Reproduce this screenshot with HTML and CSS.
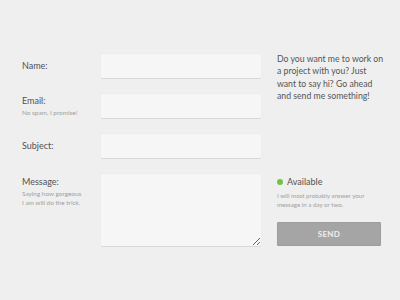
FILE: index.html
```html
<!DOCTYPE html>
<html lang="en">
<head>
  <meta charset="UTF-8" />
  <title>Contact</title>
  <link rel="stylesheet" href="styles.css">
</head>
<body>
  <div class="contact">
    <form class="fields">
      <div class="label">
        <span class="label-title">Name:</span>
      </div>
      <input type="text" name="name" />

      <div class="label">
        <span class="label-title">Email:</span>
        <span class="label-note">No spam, I promise!</span>
      </div>
      <input type="email" name="email" />

      <div class="label">
        <span class="label-title">Subject:</span>
      </div>
      <input type="text" name="subject" />

      <div class="label label-top">
        <span class="label-title">Message:</span>
        <span class="label-note">Saying how gorgeous<br>I am will do the trick.</span>
      </div>
      <textarea name="message"></textarea>
    </form>

    <div class="aside">
      <p class="intro">Do you want me to work on<br>a project with you? Just<br>want to say hi? Go ahead<br>and send me something!</p>

      <div class="status">
        <div class="status-line"><span class="dot"></span>Available</div>
        <p class="status-note">I will most probably answer your<br>message in a day or two.</p>
      </div>

      <button type="submit">SEND</button>
    </div>
  </div>
</body>
</html>
```

FILE: styles.css
```css
/* Base */
* {
  margin: 0;
  padding: 0;
  box-sizing: border-box;
  font-family: 'Lato', 'Open Sans', sans-serif;
}

body {
  background: #efefef;
  color: #555;
  width: 400px;
  height: 300px;
}

/* Layout */
.contact {
  display: flex;
  padding: 54px 0 0 22px;
}

.fields {
  display: grid;
  grid-template-columns: 79px 160px;
  row-gap: 16px;
}

/* Labels */
.label {
  display: flex;
  flex-direction: column;
  justify-content: center;
}

.label-top {
  justify-content: flex-start;
  padding-top: 2px;
}

.label-title {
  font-size: 9px;
  line-height: 12px;
  color: #525252;
}

.label:first-child .label-title,
.label:nth-child(5) .label-title {
  margin-top: -1px;
}

.label-note {
  font-size: 6.4px;
  line-height: 8.5px;
  color: #a0a0a0;
  margin-top: 2px;
}

/* Inputs */
input,
textarea {
  width: 160px;
  height: 24px;
  border: none;
  border-radius: 1px;
  background: #f6f6f6;
  box-shadow: 0 1px 0 #d9d9d9, 0 0 1px rgba(0, 0, 0, 0.08);
  outline: none;
}

textarea {
  height: 72px;
  display: block;
}

/* Aside */
.aside {
  width: 104px;
  margin-left: 16px;
  display: flex;
  flex-direction: column;
  margin-top: -1px;
}

.intro {
  font-size: 8.7px;
  line-height: 12.3px;
  color: #555;
  white-space: nowrap;
}

.status {
  margin-top: auto;
}

.status-line {
  display: flex;
  align-items: center;
  font-size: 9px;
  line-height: 12px;
  color: #525252;
  margin-top: 2px;
}

.dot {
  width: 6px;
  height: 6px;
  border-radius: 50%;
  background: #6cc644;
  margin-right: 4px;
}

.status-note {
  font-size: 6.2px;
  line-height: 9px;
  color: #a0a0a0;
  margin-top: 3px;
  white-space: nowrap;
}

/* Button */
button {
  width: 104px;
  height: 24px;
  margin-top: 13px;
  background: #a5a5a5;
  border: 1px solid #9d9d9d;
  border-radius: 1px;
  color: #efefef;
  font-size: 8px;
  font-weight: 700;
  letter-spacing: 0.3px;
}
```
